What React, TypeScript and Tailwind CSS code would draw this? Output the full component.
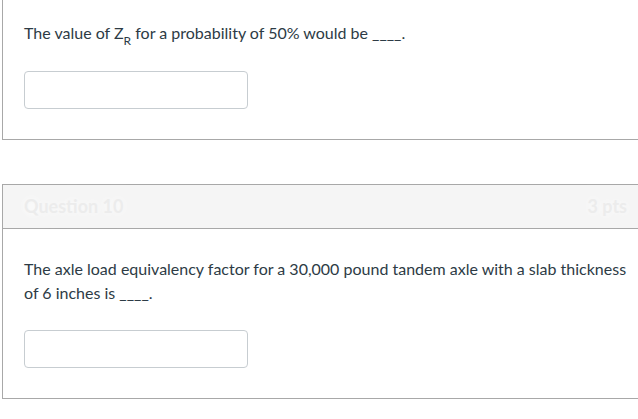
import React from 'react';

const font = { fontFamily: 'Lato, "Liberation Sans", sans-serif' };

const AnswerBox = () => (
  <input
    type="text"
    className="block w-[224px] h-[38px] rounded-[4px] border border-[#c7cdd1] bg-white px-2 outline-none"
  />
);

const App = () => {
  return (
    <div className="w-[638px] h-[419px] overflow-hidden bg-white text-[#2d3b45]" style={font}>
      {/* previous question, its header scrolled out of view */}
      <div className="ml-[2px] border-l border-b border-[#a8a8a8]">
        <div className="pl-[21px] pt-[21px] pb-[30px]">
          <p className="text-[16px] leading-[24px]">
            The value of Z<sub className="text-[12px] align-[-3px] leading-none">R</sub> for a probability of 50% would be ____.
          </p>
          <div className="mt-[26px]">
            <AnswerBox />
          </div>
        </div>
      </div>

      <div className="ml-[2px] mt-[44px] border-l border-t border-b border-[#a8a8a8]">
        <div className="h-[44px] flex items-center justify-between bg-[#f5f5f5] border-b border-[#a8a8a8] pl-[21px] pr-[11px]">
          <span className="text-[18px] font-bold text-[#ececec] [text-shadow:0_0_10px_#fff,0_0_20px_#fff]">
            Question 10
          </span>
          <span className="text-[18px] font-bold text-[#ececec] [text-shadow:0_0_10px_#fff,0_0_20px_#fff]">
            3 pts
          </span>
        </div>
        <div className="pl-[21px] pr-[10px] pt-[28px] pb-[30px]">
          <p className="text-[16px] leading-[24px]">
            The axle load equivalency factor for a 30,000 pound tandem axle with a slab thickness of 6 inches is ____.
          </p>
          <div className="mt-[25px]">
            <AnswerBox />
          </div>
        </div>
      </div>
    </div>
  );
};

export default App;
